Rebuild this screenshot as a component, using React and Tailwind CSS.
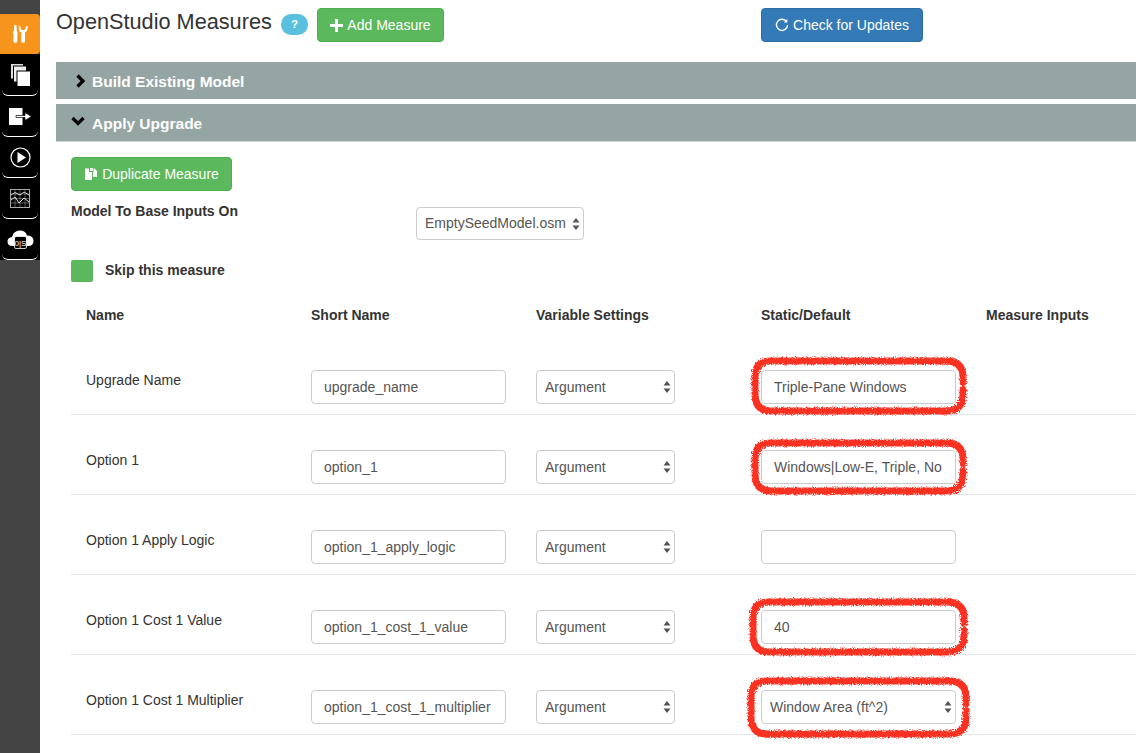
const rows = [
  { label: "Upgrade Name", short: "upgrade_name", value: "Triple-Pane Windows", ring: { x: -11, y: -14, w: 218, h: 60 } },
  { label: "Option 1", short: "option_1", value: "Windows|Low-E, Triple, No", ring: { x: -11, y: -12, w: 218, h: 58 } },
  { label: "Option 1 Apply Logic", short: "option_1_apply_logic", value: "" },
  { label: "Option 1 Cost 1 Value", short: "option_1_cost_1_value", value: "40", ring: { x: -13, y: -13, w: 221, h: 60 } },
  { label: "Option 1 Cost 1 Multiplier", short: "option_1_cost_1_multiplier", select: "Window Area (ft^2)", ring: { x: -15, y: -14, w: 225, h: 63 } },
];

function SelectArrows() {
  return (
    <svg className="absolute right-[4px] top-1/2 -translate-y-1/2 pointer-events-none" width="8" height="13" viewBox="0 0 8 13">
      <path d="M4 0.5 L7.5 5 H0.5 Z M4 12.5 L7.5 8 H0.5 Z" fill="#555" />
    </svg>
  );
}

function Select({ value, className }) {
  return (
    <div className={`relative h-[34px] ${className}`}>
      <select
        defaultValue={value}
        className="appearance-none w-full h-full bg-white border border-[#ccc] rounded-[4px] pl-[8px] text-[14px] text-[#555] outline-none"
      >
        <option>{value}</option>
      </select>
      <SelectArrows />
    </div>
  );
}

function TextInput({ value }) {
  return (
    <input
      readOnly
      value={value}
      className="w-[195px] h-[34px] bg-white border border-[#ccc] rounded-[4px] px-[12px] text-[14px] text-[#555] outline-none"
    />
  );
}

// hand drawn red marker loop around the edited values
function Ring({ x, y, w, h }) {
  const r = 17;
  const gap = h * 0.47;
  const d = `M${w - 5} ${gap - 2} V${4 + r} Q${w - 5} 5 ${w - 5 - r} 5 H${4 + r} Q5 5 5 ${4 + r} V${h - 5 - r} Q5 ${h - 5} ${4 + r} ${h - 5} H${w - 5 - r} Q${w - 5} ${h - 5} ${w - 5} ${h - 5 - r} V${gap + 5}`;
  return (
    <svg className="absolute pointer-events-none overflow-visible" style={{ left: x, top: y }} width={w} height={h} viewBox={`0 0 ${w} ${h}`}>
      <path d={d} fill="none" stroke="#fb3022" strokeWidth="7" strokeLinecap="round" filter="url(#rough)" />
    </svg>
  );
}

function NavItem({ children, className = "h-[41px]" }) {
  return (
    <div className={`bg-black ${className}`}>
      <div className="h-full mx-[2px] border-b border-white rounded-b-[6px] flex items-center justify-center">{children}</div>
    </div>
  );
}

function GreenButton({ children, className }) {
  return (
    <button className={`h-[34px] bg-[#5cb85c] border border-[#4cae4c] rounded-[4px] text-white text-[14px] flex items-center justify-center ${className}`}>
      {children}
    </button>
  );
}

export default function App() {
  return (
    <div className="w-[1136px] h-[753px] flex overflow-hidden bg-white font-['Liberation_Sans',Arial,sans-serif] text-[#333]">
      <svg width="0" height="0" className="absolute">
        <filter id="rough" x="-5%" y="-15%" width="110%" height="130%">
          <feTurbulence type="fractalNoise" baseFrequency="0.9" numOctaves="2" seed="4" />
          <feDisplacementMap in="SourceGraphic" scale="5" />
        </filter>
      </svg>

      <aside className="w-[41px] shrink-0 bg-[#444] pt-[14px] border-r border-white">
        <div className="h-[40px] bg-[#f7941e] rounded-r-[4px] flex items-center justify-center">
          <svg width="15" height="18" viewBox="0 0 15 18" fill="#fff">
            <path d="M1.3 0 H3.4 L3.9 6.5 H4.6 V9 H4.3 V16 Q4.3 18 2.4 18 Q0.4 18 0.4 16 V9 H0 V6.5 H0.8 Z" />
            <path d="M6 0.6 Q4.8 5.6 8.2 7.4 V16 Q8.2 18 10.1 18 Q12 18 12 16 V7.4 Q15.6 5.6 14.3 0.6 L12.6 2 V4 L11 5 H9.2 L7.6 4 V2 Z" />
          </svg>
        </div>
        <NavItem className="h-[42px]">
          <svg width="21" height="24" viewBox="0 0 21 24" fill="#fff" stroke="#000" strokeWidth="1">
            <rect x="0.5" y="0.5" width="13" height="15.5" fill="#ddd" />
            <rect x="3.5" y="3" width="13" height="16" fill="#eee" />
            <rect x="7" y="8" width="13.5" height="15.5" />
          </svg>
        </NavItem>
        <NavItem>
          <svg width="23" height="17" viewBox="0 0 23 17">
            <rect x="0" y="0" width="13.5" height="17" fill="#fff" />
            <path d="M7 7.5 H16 V4.5 L22.5 8.5 L16 12.5 V9.5 H7 Z" fill="#fff" stroke="#000" strokeWidth="0.7" />
          </svg>
        </NavItem>
        <NavItem>
          <svg width="21" height="21" viewBox="0 0 21 21">
            <circle cx="10.5" cy="10.5" r="9.5" fill="none" stroke="#fff" strokeWidth="1.2" />
            <path d="M7.5 5 L16 10.5 L7.5 16 Z" fill="#fff" />
          </svg>
        </NavItem>
        <NavItem>
          <svg width="20" height="19" viewBox="0 0 20 19" fill="none" stroke="#aaa">
            <rect x="0.5" y="0.5" width="19" height="18" strokeWidth="1" />
            <path d="M0.5 5 H19.5 M0.5 9.5 H19.5 M0.5 14 H19.5 M5 0.5 V18.5 M10 0.5 V18.5 M15 0.5 V18.5" strokeWidth="0.5" />
            <path d="M1 6 L5 3.5 L10 6 L14 3 L19 6" stroke="#ddd" strokeWidth="1" />
            <path d="M1 11 L5 8 L9 14 L14 9 L19 13" stroke="#ddd" strokeWidth="1" />
          </svg>
        </NavItem>
        <NavItem>
          <svg width="27" height="19" viewBox="0 0 27 19">
            <path d="M6 16 Q0.5 16 0.5 11.5 Q0.5 7.5 5 7 Q6.5 0.5 13 0.5 Q18.5 0.5 20 5.5 Q26.5 5.5 26.5 11 Q26.5 16 21 16 Z" fill="#fff" />
            <rect x="7.5" y="6.5" width="12" height="12" rx="1.5" fill="#000" stroke="#fff" strokeWidth="0.8" />
            <text x="13.5" y="15.5" fontSize="8" fill="#fff" textAnchor="middle" fontFamily="Liberation Sans">0|S</text>
          </svg>
        </NavItem>
      </aside>

      <main className="flex-1 min-w-0 pl-[15px]">
        <div className="h-[62px] flex items-start pt-[8px]">
          <h1 className="text-[21.7px] leading-[28px] font-normal w-[225px] shrink-0 whitespace-nowrap">OpenStudio Measures</h1>
          <span className="mt-[6px] w-[27px] h-[21px] rounded-[10px] bg-[#5bc0de] text-white text-[11px] font-bold flex items-center justify-center">?</span>
          <GreenButton className="ml-[9px] w-[127px] gap-[4px]">
            <svg width="13" height="13" viewBox="0 0 13 13" fill="#fff"><path d="M5 0 H8 V5 H13 V8 H8 V13 H5 V8 H0 V5 H5 Z" /></svg>
            Add Measure
          </GreenButton>
          <button className="ml-[317px] w-[162px] h-[34px] bg-[#337ab7] border border-[#2e6da4] rounded-[4px] text-white text-[14px] flex items-center justify-center gap-[4px]">
            <svg width="14" height="14" viewBox="0 0 14 14" fill="none" stroke="#fff" strokeWidth="1.4">
              <path d="M11.6 3.6 A5.6 5.6 0 1 0 12.6 7" />
              <path d="M12.3 0.8 V4.4 H8.8 Z" strokeWidth="0" fill="#fff" />
            </svg>
            Check for Updates
          </button>
        </div>

        <div className="h-[37px] pt-[2px] bg-[#95a5a3] flex items-center pl-[19px] gap-[6px] text-white font-bold text-[15.5px]">
          <svg className="-mt-[2px]" width="11" height="14" viewBox="0 0 11 14" fill="none" stroke="#000" strokeWidth="3.2"><path d="M2.5 1.5 L8 7 L2.5 12.5" /></svg>
          Build Existing Model
        </div>
        <div className="h-[38px] pt-[2px] mt-[5px] bg-[#95a5a3] border-b border-[#cfdad8] flex items-center pl-[15px] gap-[7px] text-white font-bold text-[15.5px]">
          <svg className="-mt-[4px]" width="14" height="11" viewBox="0 0 14 11" fill="none" stroke="#000" strokeWidth="3.2"><path d="M1.5 2 L7 7.5 L12.5 2" /></svg>
          Apply Upgrade
        </div>

        <div className="pl-[15px] pt-[15px]">
          <GreenButton className="w-[161px] gap-[4px]">
            <svg width="14" height="14" viewBox="0 0 14 14" fill="#fff">
              <path d="M1 1.5 H5 V5 H8 V13 H1 Z" />
              <path d="M6 1 H8.5 L9.5 2 V4 H6 Z M10 1 L13 4 V10 H9 V4.5 H10 Z" />
            </svg>
            Duplicate Measure
          </GreenButton>

          <div className="flex mt-[16px] h-[33px]">
            <div className="w-[345px] text-[14px] leading-[10px] font-bold -mt-[1px]">Model To Base Inputs On</div>
            <Select value="EmptySeedModel.osm" className="w-[168px] !h-[33px]" />
          </div>

          <div className="flex items-center mt-[20px] h-[22px]">
            <div className="w-[22px] h-[22px] rounded-[2px] bg-[#5cb85c]" />
            <span className="ml-[12px] -mt-[1px] text-[14px] font-bold">Skip this measure</span>
          </div>

          <div className="flex mt-[23px] h-[30px] pl-[15px] text-[14px] leading-[20px] font-bold">
            <div className="w-[225px]">Name</div>
            <div className="w-[225px]">Short Name</div>
            <div className="w-[225px]">Variable Settings</div>
            <div className="w-[225px]">Static/Default</div>
            <div className="whitespace-nowrap">Measure Inputs</div>
          </div>

          {rows.map((row) => (
            <div key={row.short} className="flex h-[80px] pt-[35px] pl-[15px] border-b border-[#e4e4e4] text-[14px] leading-[20px]">
              <div className="w-[225px] text-[#333]">{row.label}</div>
              <div className="w-[225px]"><TextInput value={row.short} /></div>
              <div className="w-[225px]"><Select value="Argument" className="w-[139px]" /></div>
              <div className="w-[225px] relative">
                {row.select ? <Select value={row.select} className="w-[195px]" /> : <TextInput value={row.value} />}
                {row.ring && <Ring {...row.ring} />}
              </div>
            </div>
          ))}
        </div>
      </main>
    </div>
  );
}
